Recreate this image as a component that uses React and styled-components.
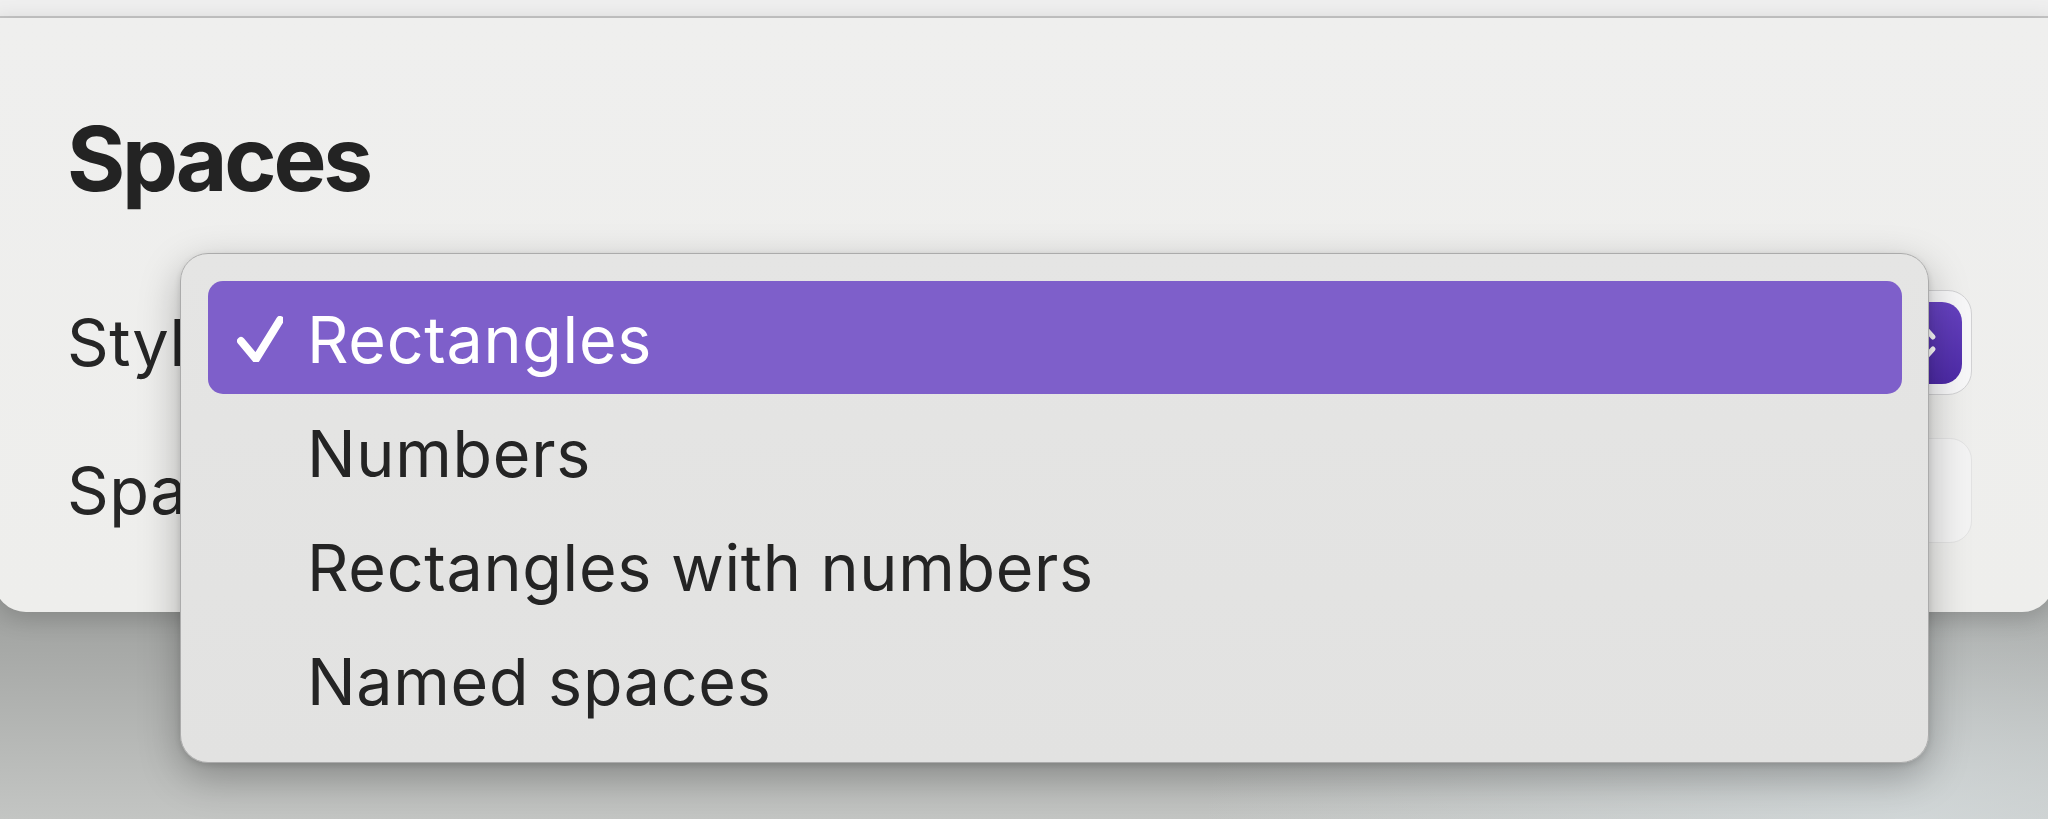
import React from "react";
import styled, { createGlobalStyle } from "styled-components";

const Global = createGlobalStyle`
  html, body { margin: 0; padding: 0; }
  body {
    font-family: Inter, "Noto Sans", "Liberation Sans", sans-serif;
    color: #262626;
    -webkit-font-smoothing: antialiased;
  }
`;

const Page = styled.div`
  position: relative;
  width: 2048px;
  height: 819px;
  overflow: hidden;
  background:
    radial-gradient(ellipse 700px 300px at 1900px 819px, rgba(215, 222, 224, 0.7), rgba(215, 222, 224, 0) 100%),
    linear-gradient(180deg, #9fa19f 0px, #a2a4a2 620px, #c3c5c3 819px);
`;

const TitleStrip = styled.div`
  height: 16px;
  background: #efefef;
  border-bottom: 2px solid #c7c7c7;
`;

const Panel = styled.section`
  margin: 0 -6px;
  height: 594px;
  box-sizing: border-box;
  padding: 87px 82px 69px 73px;
  background: linear-gradient(180deg, #efefee 0%, #eeeeec 100%);
  border-radius: 0 0 32px 32px;
  box-shadow: 0 6px 24px rgba(0, 0, 0, 0.18);
  display: flex;
  flex-direction: column;
`;

const Heading = styled.h1`
  margin: 0 0 77px;
  font-size: 89px;
  line-height: 108px;
  font-weight: 700;
  letter-spacing: -3.2px;
  color: #232323;
`;

const Form = styled.div`
  display: flex;
  flex-direction: column;
  gap: 43px;
`;

const Row = styled.div`
  height: 105px;
  display: flex;
  align-items: center;
  justify-content: space-between;
`;

const Label = styled.span`
  font-size: 65px;
  letter-spacing: 0.5px;
  color: #262626;
`;

const PopupButton = styled.div`
  width: 520px;
  height: 105px;
  box-sizing: border-box;
  padding: 11px 9px 11px 28px;
  border-radius: 24px;
  background: #f7f7f8;
  border: 1px solid #d2d2d4;
  display: flex;
  align-items: center;
  justify-content: space-between;
  font-size: 65px;
`;

const Stepper = styled.div`
  width: 76px;
  height: 82px;
  border-radius: 20px;
  background: linear-gradient(180deg, #6642c0 0%, #4d2aa6 100%);
  display: flex;
  align-items: center;
  justify-content: center;
`;

const TextField = styled.div`
  width: 520px;
  height: 105px;
  box-sizing: border-box;
  border-radius: 22px;
  background: #f3f3f3;
  border: 1px solid #e3e3e3;
`;

const Menu = styled.div`
  position: absolute;
  left: 180px;
  top: 253px;
  width: 1749px;
  height: 510px;
  box-sizing: border-box;
  padding: 27px 26px 24px 27px;
  border-radius: 28px;
  background: linear-gradient(180deg, #e5e5e4 0%, #e2e2e1 100%);
  border: 1.5px solid #ababab;
  box-shadow: 0 14px 40px rgba(0, 0, 0, 0.28), 0 2px 6px rgba(0, 0, 0, 0.12);
  display: flex;
  flex-direction: column;
`;

const Item = styled.div`
  height: ${(p) => (p.$selected ? "113px" : "114px")};
  margin-bottom: ${(p) => (p.$selected ? "1px" : "0")};
  box-sizing: border-box;
  padding: 3px 0 0 29px;
  display: flex;
  align-items: center;
  gap: 24px;
  border-radius: 15px;
  background: ${(p) => (p.$selected ? "#7e5fca" : "transparent")};
  color: ${(p) => (p.$selected ? "#ffffff" : "#242424")};
  font-size: 64.6px;
  letter-spacing: 0.7px;
  white-space: nowrap;
`;

const CheckSlot = styled.span`
  width: 46px;
  height: 46px;
  display: flex;
  flex-shrink: 0;
`;

const Check = () => (
  <svg width="46" height="46" viewBox="0 0 46 46">
    <polyline
      points="4,25 19,43 43,4"
      fill="none"
      stroke="#ffffff"
      strokeWidth="8"
      strokeLinecap="round"
      strokeLinejoin="round"
    />
  </svg>
);

const Chevrons = () => (
  <svg width="30" height="50" viewBox="0 0 30 50">
    <polyline points="6,19 15,9 24,19" fill="none" stroke="#fff" strokeWidth="5" strokeLinecap="round" strokeLinejoin="round" />
    <polyline points="6,31 15,41 24,31" fill="none" stroke="#fff" strokeWidth="5" strokeLinecap="round" strokeLinejoin="round" />
  </svg>
);

const options = ["Rectangles", "Numbers", "Rectangles with numbers", "Named spaces"];

export default function App() {
  return (
    <>
      <Global />
      <Page>
        <TitleStrip />
        <Panel>
          <Heading>Spaces</Heading>
          <Form>
            <Row>
              <Label>Style</Label>
              <PopupButton>
                <span>Rectangles</span>
                <Stepper>
                  <Chevrons />
                </Stepper>
              </PopupButton>
            </Row>
            <Row>
              <Label>Spacing</Label>
              <TextField />
            </Row>
          </Form>
        </Panel>
        <Menu>
          {options.map((o, i) => (
            <Item key={o} $selected={i === 0}>
              <CheckSlot>{i === 0 && <Check />}</CheckSlot>
              <span>{o}</span>
            </Item>
          ))}
        </Menu>
      </Page>
    </>
  );
}
